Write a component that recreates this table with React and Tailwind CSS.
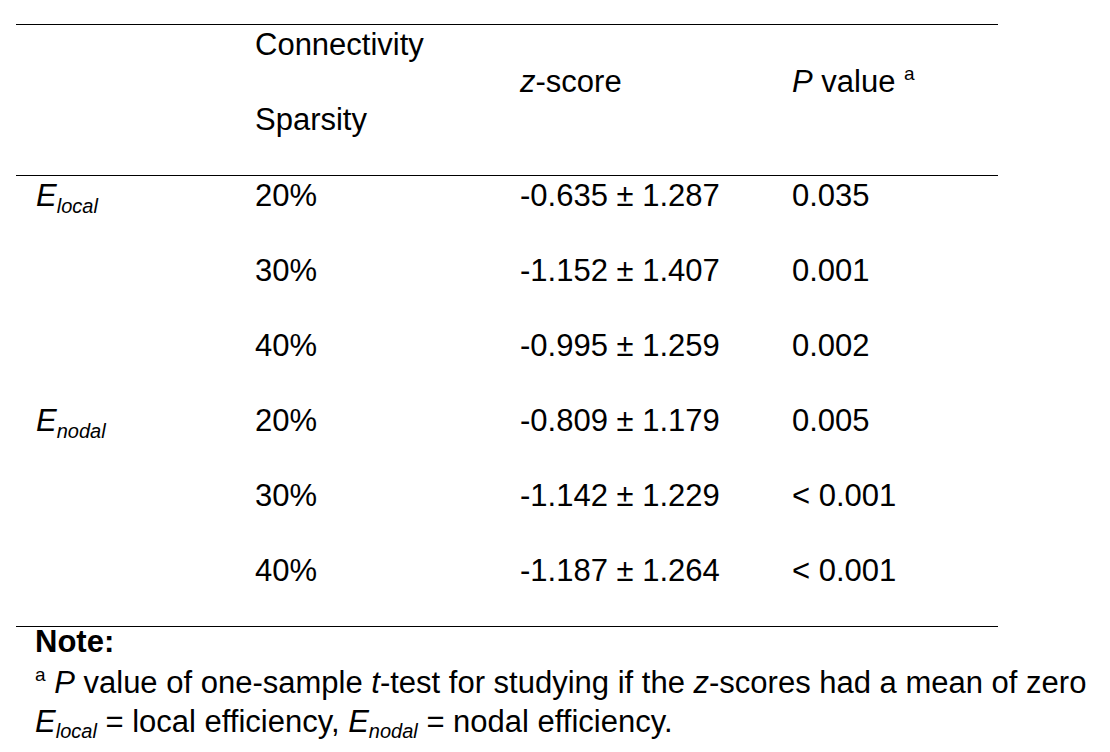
export default function App() {
  const rows = [
    ["local", "20%", "-0.635 ± 1.287", "0.035"],
    [null, "30%", "-1.152 ± 1.407", "0.001"],
    [null, "40%", "-0.995 ± 1.259", "0.002"],
    ["nodal", "20%", "-0.809 ± 1.179", "0.005"],
    [null, "30%", "-1.142 ± 1.229", "< 0.001"],
    [null, "40%", "-1.187 ± 1.264", "< 0.001"],
  ];
  return (
    <div className="w-[1110px] h-[752px] bg-white text-black font-['Liberation_Sans',Arial,sans-serif] text-[31px] pt-[24px] pl-[16px] overflow-hidden">
      <div className="w-[982px]">
        <div className="h-px bg-black" />
        <div className="grid grid-cols-[239px_265px_272px_1fr] h-[150px]">
          <div />
          <div className="flex flex-col">
            <div className="h-[75px] leading-[40px]">Connectivity</div>
            <div className="h-[75px] leading-[40px]">Sparsity</div>
          </div>
          <div className="pt-[37px] leading-[40px]">
            <span className="italic">z</span>-score
          </div>
          <div className="pt-[37px] leading-[40px]">
            <span className="italic">P</span> value{" "}
            <span className="relative -top-[12px] text-[19px]">a</span>
          </div>
        </div>
        <div className="h-px bg-black" />
        {rows.map((r, i) => (
          <div key={i} className="grid grid-cols-[239px_265px_272px_1fr] h-[75px] leading-[40px]">
            <div className="pl-[20px]">
              {r[0] && (
                <span className="italic">
                  E<span className="text-[20px] relative top-[7px]">{r[0]}</span>
                </span>
              )}
            </div>
            <div>{r[1]}</div>
            <div>{r[2]}</div>
            <div>{r[3]}</div>
          </div>
        ))}
        <div className="h-px bg-black" />
      </div>
      <div className="pl-[19px] whitespace-nowrap">
        <div className="font-bold leading-[30px]">Note:</div>
        <div className="mt-[8px] leading-[35px]">
          <span className="relative -top-[12px] text-[19px]">a</span>{" "}
          <span className="italic">P</span> value of one-sample <span className="italic">t</span>-test for studying if the{" "}
          <span className="italic">z</span>-scores had a mean of zero
        </div>
        <div className="leading-[35px]">
          <span className="italic">
            E<span className="text-[20px] relative top-[6px]">local</span>
          </span>{" "}
          = local efficiency,{" "}
          <span className="italic">
            E<span className="text-[20px] relative top-[6px]">nodal</span>
          </span>{" "}
          = nodal efficiency.
        </div>
      </div>
    </div>
  );
}
